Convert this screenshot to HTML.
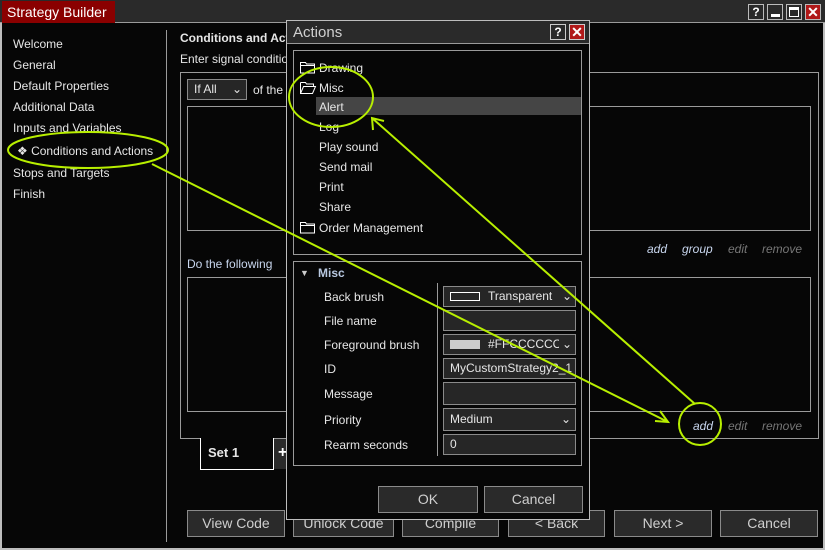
<!DOCTYPE html>
<html><head><meta charset="utf-8"><style>
*{margin:0;padding:0;box-sizing:border-box}
body{width:825px;height:550px;background:#060606;font-family:"Liberation Sans",Arial,sans-serif;font-size:12px;color:#e6e6e6;position:relative;overflow:hidden}
.a{position:absolute}
.t{position:absolute;white-space:nowrap;line-height:14px}
.box{position:absolute;border:1px solid #9a9a9a}
.btn{position:absolute;background:#2a2a2a;border:1px solid #8a8a8a;color:#cfcfcf;font-size:14px;text-align:center;line-height:25px}
.inp{position:absolute;background:#262626;border:1px solid #8a8a8a;color:#e6e6e6;font-size:12px;line-height:19px;padding-left:6px;white-space:nowrap;overflow:hidden}
.lk{position:absolute;font-style:italic;font-size:12px;line-height:14px}
</style></head><body>
<div class="a" style="left:0;top:0;width:825px;height:550px;border:2px solid #bdbdbd;border-top:none"></div>
<div class="a" style="left:0;top:0;width:825px;height:23px;background:#2a2a2a;border-bottom:1px solid #9a9a9a"></div>
<div class="a" style="left:2px;top:1px;width:113px;height:22px;background:#8a0000"></div>
<div class="t" style="left:7px;top:4px;font-size:14px;color:#fff;line-height:16px">Strategy Builder</div>
<div class="a" style="left:748px;top:4px;width:16px;height:16px;border:1px solid #bbb;color:#fff;font-weight:bold;font-size:12px;text-align:center;line-height:14px">?</div>
<div class="a" style="left:767px;top:4px;width:16px;height:16px;border:1px solid #bbb"><div class="a" style="left:3px;top:9px;width:9px;height:3px;background:#fff"></div></div>
<div class="a" style="left:786px;top:4px;width:16px;height:16px;border:1px solid #bbb"><div class="a" style="left:2px;top:2px;width:10px;height:10px;border:1px solid #fff;border-top-width:3px"></div></div>
<div class="a" style="left:805px;top:4px;width:16px;height:16px;border:1px solid #bbb;background:#b01818;color:#fff;font-weight:bold;font-size:14px;text-align:center;line-height:14px">✕</div>

<div class="t" style="left:13px;top:37px">Welcome</div>
<div class="t" style="left:13px;top:58px">General</div>
<div class="t" style="left:13px;top:79px">Default Properties</div>
<div class="t" style="left:13px;top:100px">Additional Data</div>
<div class="t" style="left:13px;top:121px">Inputs and Variables</div>
<div class="t" style="left:17px;top:144px">❖ Conditions and Actions</div>
<div class="t" style="left:13px;top:166px">Stops and Targets</div>
<div class="t" style="left:13px;top:187px">Finish</div>
<div class="a" style="left:166px;top:30px;width:1px;height:512px;background:#9a9a9a"></div>

<div class="t" style="left:180px;top:31px;font-weight:bold">Conditions and Actions</div>
<div class="t" style="left:180px;top:52px">Enter signal conditions</div>
<div class="box" style="left:180px;top:72px;width:639px;height:367px"></div>
<div class="inp" style="left:187px;top:79px;width:60px;height:21px;line-height:19px">If All <span style="position:absolute;right:4px">⌄</span></div>
<div class="t" style="left:253px;top:83px">of the</div>
<div class="box" style="left:187px;top:106px;width:624px;height:125px"></div>
<span class="lk" style="left:647px;top:242px;color:#c8d6ee">add</span>
<span class="lk" style="left:682px;top:242px;color:#c8d6ee">group</span>
<span class="lk" style="left:728px;top:242px;color:#777">edit</span>
<span class="lk" style="left:762px;top:242px;color:#777">remove</span>
<div class="t" style="left:187px;top:257px;color:#c8d6ee">Do the following</div>
<div class="box" style="left:187px;top:277px;width:624px;height:135px"></div>
<span class="lk" style="left:693px;top:419px;color:#c8d6ee">add</span>
<span class="lk" style="left:728px;top:419px;color:#777">edit</span>
<span class="lk" style="left:762px;top:419px;color:#777">remove</span>
<div class="a" style="left:200px;top:438px;width:74px;height:32px;background:#060606;border:1px solid #fff;border-top:none"></div>
<div class="t" style="left:208px;top:446px;font-weight:bold;font-size:13px">Set 1</div>
<div class="a" style="left:274px;top:439px;width:16px;height:30px;background:#2a2a2a;color:#fff;font-weight:bold;font-size:16px;padding-left:4px;line-height:28px">+</div>

<div class="btn" style="left:187px;top:510px;width:98px;height:27px">View Code</div>
<div class="btn" style="left:293px;top:510px;width:101px;height:27px">Unlock Code</div>
<div class="btn" style="left:402px;top:510px;width:97px;height:27px">Compile</div>
<div class="btn" style="left:508px;top:510px;width:97px;height:27px">&lt; Back</div>
<div class="btn" style="left:614px;top:510px;width:98px;height:27px">Next &gt;</div>
<div class="btn" style="left:720px;top:510px;width:98px;height:27px">Cancel</div>

<!-- dialog -->
<div class="a" style="left:286px;top:20px;width:304px;height:500px;background:#060606;border:1px solid #bdbdbd"></div>
<div class="a" style="left:287px;top:21px;width:302px;height:23px;background:#2a2a2a;border-bottom:1px solid #9a9a9a"></div>
<div class="t" style="left:293px;top:24px;font-size:15px;line-height:17px;color:#d0d0d0">Actions</div>
<div class="a" style="left:550px;top:24px;width:16px;height:16px;border:1px solid #ccc;color:#fff;font-weight:bold;text-align:center;line-height:14px">?</div>
<div class="a" style="left:569px;top:24px;width:16px;height:16px;border:1px solid #ccc;background:#b01818;color:#fff;font-weight:bold;font-size:14px;text-align:center;line-height:14px">✕</div>
<div class="box" style="left:293px;top:50px;width:289px;height:205px"></div>
<div class="a" style="left:316px;top:97px;width:265px;height:18px;background:#454545"></div>
<svg class="a" style="left:299px;top:60px" width="18" height="180" fill="none" stroke="#fff" stroke-width="1">
<path d="M1.5 2.5h5l1 1.5h8v9h-14z M1.5 5.5h14"/>
<path d="M1.5 22.5h5l1 1.5h7v2 M1.5 22.5v11h12l3-7h-12l-3 7"/>
<path d="M1.5 162.5h5l1 1.5h8v9h-14z M1.5 165.5h14"/>
</svg>
<div class="t" style="left:319px;top:61px">Drawing</div>
<div class="t" style="left:319px;top:81px">Misc</div>
<div class="t" style="left:319px;top:100px">Alert</div>
<div class="t" style="left:319px;top:120px">Log</div>
<div class="t" style="left:319px;top:140px">Play sound</div>
<div class="t" style="left:319px;top:160px">Send mail</div>
<div class="t" style="left:319px;top:180px">Print</div>
<div class="t" style="left:319px;top:200px">Share</div>
<div class="t" style="left:319px;top:221px">Order Management</div>

<div class="box" style="left:293px;top:261px;width:289px;height:205px"></div>
<div class="t" style="left:300px;top:266px;font-size:9px;color:#ccc">▼</div>
<div class="t" style="left:318px;top:266px;font-weight:bold;color:#b8c8e0">Misc</div>
<div class="a" style="left:437px;top:283px;width:1px;height:173px;background:#9a9a9a"></div>
<div class="t" style="left:324px;top:290px">Back brush</div>
<div class="t" style="left:324px;top:314px">File name</div>
<div class="t" style="left:324px;top:338px">Foreground brush</div>
<div class="t" style="left:324px;top:362px">ID</div>
<div class="t" style="left:324px;top:387px">Message</div>
<div class="t" style="left:324px;top:413px">Priority</div>
<div class="t" style="left:324px;top:438px">Rearm seconds</div>
<div class="inp" style="left:443px;top:286px;width:133px;height:21px"><span style="display:inline-block;width:30px;height:9px;border:1px solid #fff;vertical-align:middle;margin-right:8px"></span>Transparent<span style="position:absolute;right:3px;top:0">⌄</span></div>
<div class="inp" style="left:443px;top:310px;width:133px;height:21px"></div>
<div class="inp" style="left:443px;top:334px;width:133px;height:21px"><span style="display:inline-block;width:30px;height:9px;background:#ccc;vertical-align:middle;margin-right:8px"></span>#FFCCCCCC<span style="position:absolute;right:0;top:0;background:#262626;padding:0 3px">⌄</span></div>
<div class="inp" style="left:443px;top:358px;width:133px;height:21px">MyCustomStrategy2_1</div>
<div class="inp" style="left:443px;top:382px;width:133px;height:23px"></div>
<div class="inp" style="left:443px;top:408px;width:133px;height:23px;line-height:21px">Medium<span style="position:absolute;right:4px;top:0">⌄</span></div>
<div class="inp" style="left:443px;top:434px;width:133px;height:21px">0</div>
<div class="btn" style="left:378px;top:486px;width:100px;height:27px">OK</div>
<div class="btn" style="left:484px;top:486px;width:99px;height:27px">Cancel</div>

<svg class="a" style="left:0;top:0" width="825" height="550" fill="none" stroke="#b8ef00" stroke-width="2">
<ellipse cx="88" cy="150" rx="80" ry="18"/>
<ellipse cx="331" cy="97" rx="42" ry="30"/>
<circle cx="700" cy="424" r="21"/>
<path d="M152 164 L668 422 M655 421 L668 422 L660 411"/>
<path d="M695 404 L372 118 M373 130 L372 118 L384 121"/>
</svg>
</body></html>
